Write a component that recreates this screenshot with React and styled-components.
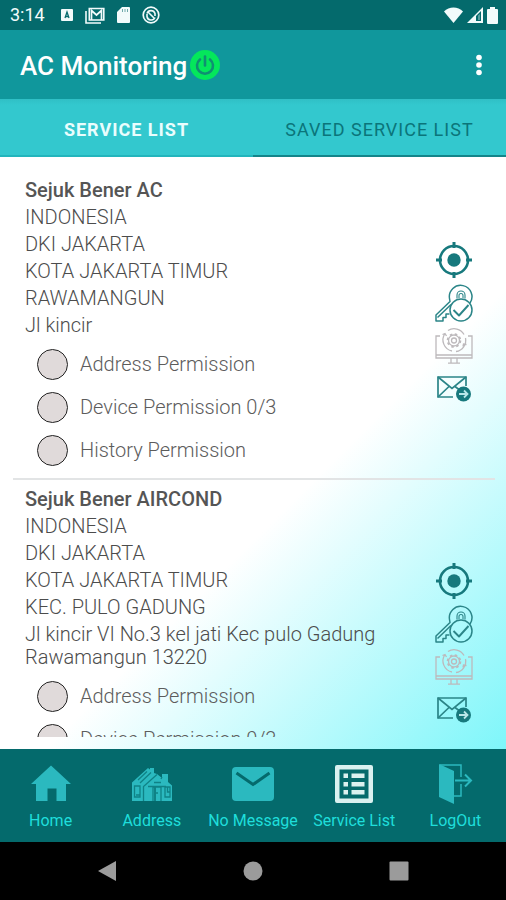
import React, { useState } from "react";
import styled, { createGlobalStyle } from "styled-components";

const GlobalStyles = createGlobalStyle`
  *,
  *::before,
  *::after {
    box-sizing: border-box;
  }
  body {
    margin: 0;
    font-family: Roboto, "Liberation Sans", sans-serif;
    background-color: #000;
  }
  button {
    padding: 0;
    border: none;
    background: none;
    color: inherit;
    font-family: inherit;
    cursor: pointer;
  }
  svg {
    display: block;
    flex-shrink: 0;
  }
`;

const AppStyles = styled.div`
  display: flex;
  flex-direction: column;
  height: 100vh;
`;

const StatusBar = styled.div`
  display: flex;
  align-items: center;
  justify-content: space-between;
  height: 30px;
  padding: 0 8px 0 10px;
  background-color: #046a6c;
  color: #f2fbfb;
`;

const StatusGroup = styled.div`
  display: flex;
  align-items: center;
  gap: ${(props) => props.$gap}px;
`;

const Clock = styled.span`
  margin-right: 4px;
  font-size: 18px;
  line-height: 20px;
`;

const Header = styled.header`
  display: flex;
  align-items: center;
  justify-content: space-between;
  height: 69px;
  padding: 0 20px;
  background-color: #10979c;
  color: #fff;
`;

const Brand = styled.div`
  display: flex;
  align-items: center;
  gap: 3px;
`;

const Heading = styled.h1`
  margin: 0;
  padding-top: 2px;
  font-size: 26px;
  line-height: 32px;
  font-weight: 500;
`;

const Tabs = styled.div`
  display: flex;
  background: linear-gradient(#30bfc5, #33c8ce 6px);
`;

const Tab = styled.button`
  flex: 1;
  height: 58px;
  padding-top: 4px;
  border-bottom: 2px solid
    ${(props) => (props.$active ? "#22b5bc" : "#14858a")};
  color: ${(props) => (props.$active ? "#e9fdfd" : "#0b757a")};
  font-size: 18px;
  font-weight: ${(props) => (props.$active ? 700 : 400)};
  letter-spacing: 1px;
  text-transform: uppercase;
`;

const Content = styled.main`
  display: flex;
  flex: 1;
  flex-direction: column;
  min-height: 0;
  padding: 14px 11px 12px 13px;
  background: linear-gradient(135deg, #fff 58%, #7ef6fa 100%);
`;

const List = styled.ul`
  flex: 1;
  min-height: 0;
  margin: 0;
  padding: 0;
  overflow-y: auto;
  list-style: none;
  scrollbar-width: none;
`;

const ServiceItem = styled.li`
  display: flex;
  align-items: center;
  gap: 16px;
  padding: 6px 22px 6px 12px;
  & + & {
    border-top: 2px solid #e2e4e5;
  }
`;

const ServiceInfo = styled.div`
  flex: 1;
  min-width: 0;
  color: #4c4c4c;
  font-size: 20px;
  line-height: 23px;
  font-weight: 300;
`;

const ServiceName = styled.h2`
  margin: 0;
  padding: 2px 0;
  color: #555;
  font-size: 20px;
  line-height: 23px;
  font-weight: 500;
`;

const AddressLine = styled.p`
  margin: 0;
  padding: 2px 0;
`;

const Permissions = styled.div`
  padding: 4px 0 0 12px;
`;

const Permission = styled.label`
  display: flex;
  align-items: center;
  gap: 12px;
  height: 43px;
  color: #5c5c5c;
`;

const Check = styled.input`
  appearance: none;
  width: 31px;
  height: 31px;
  margin: 0;
  border: 1px solid #222;
  border-radius: 50%;
  background-color: #e0dada;
  &:checked {
    background-color: #00e65a;
  }
`;

const Actions = styled.div`
  display: flex;
  flex-direction: column;
  gap: 5px;
`;

const BottomNav = styled.nav`
  display: flex;
  padding: 15px 0 11px;
  background-color: #046a6c;
`;

const NavButton = styled.button`
  display: flex;
  flex: 1;
  flex-direction: column;
  align-items: center;
  gap: 7px;
  width: 0;
  color: ${(props) => (props.$active ? "#daf1f0" : "#2bb9bf")};
`;

const NavLabel = styled.span`
  color: #1fdedb;
  font-size: 16px;
  line-height: 20px;
  white-space: nowrap;
`;

const SystemBar = styled.div`
  display: flex;
  align-items: center;
  justify-content: center;
  gap: 126px;
  height: 58px;
  background-color: #000;
  color: #9b9b9b;
`;

const IconKeyboard = () => (
  <svg width="12" height="14" viewBox="0 0 12 14">
    <rect y="1" width="12" height="12" rx="1" fill="currentColor" />
    <path d="M4 10 6 4l2 6M4.5 8.5h3" fill="none" stroke="#046a6c" strokeWidth="1.3" />
  </svg>
);

const IconMails = () => (
  <svg width="20" height="17" viewBox="0 0 20 17">
    <path d="M1 4v12h15" fill="none" stroke="currentColor" strokeWidth="1.6" />
    <path d="M4.300 1.500h14.500v11.500H4.300z" fill="none" stroke="currentColor" strokeWidth="1.600" />
    <path d="M6.500 13V3.500l5 4.500 5-4.500V13" fill="none" stroke="currentColor" strokeWidth="1.700" />
  </svg>
);

const IconSdCard = () => (
  <svg width="13" height="16" viewBox="0 0 13 16">
    <path
      d="M5 0h7a1 1 0 0 1 1 1v14a1 1 0 0 1-1 1H1a1 1 0 0 1-1-1V5z"
      fill="currentColor"
    />
    <path d="M5.500 2v3M8 2v3M10.500 2v3" stroke="#6fa9aa" strokeWidth="1" />
  </svg>
);

const IconSync = () => (
  <svg width="18" height="18" viewBox="0 0 18 18" fill="none" stroke="currentColor">
    <circle cx="9" cy="9" r="7.800" strokeWidth="1.700" />
    <path d="M5 7.500a4.200 4.200 0 0 1 8 0v2.500M13 11.500a4.200 4.200 0 0 1-8-1V8M6 6l6.500 6.500" strokeWidth="1.600" />
  </svg>
);

const IconWifi = () => (
  <svg width="19" height="16" viewBox="0 0 19 16">
    <path d="M9.500 16 0 4.500C5-1 14-1 19 4.500z" fill="currentColor" />
  </svg>
);

const IconSignal = () => (
  <svg width="16" height="16" viewBox="0 0 16 16">
    <path d="M16 0v16H0z" fill="currentColor" />
    <path d="M9 14V9L14 4v10z" fill="#046a6c" />
    <path d="M11 13V8.500L13 7v6z" fill="currentColor" opacity=".35" />
  </svg>
);

const IconBattery = () => (
  <svg width="11" height="17" viewBox="0 0 11 17">
    <path d="M3 0h5v2h2a1 1 0 0 1 1 1v13a1 1 0 0 1-1 1H1a1 1 0 0 1-1-1V3a1 1 0 0 1 1-1h2z" fill="currentColor" />
  </svg>
);

const IconPower = () => (
  <svg width="30" height="30" viewBox="0 0 30 30">
    <circle cx="15" cy="15" r="15" fill="#04e75b" />
    <g fill="none" stroke="#0f8f72" strokeWidth="2.600" strokeLinecap="round">
      <path d="M10 9.500a8 8 0 1 0 10 0" />
      <path d="M15 6.500v9" />
    </g>
  </svg>
);

const IconDots = () => (
  <svg width="14" height="22" viewBox="0 0 14 22" fill="currentColor">
    <circle cx="7" cy="3.500" r="2.800" />
    <circle cx="7" cy="11" r="2.800" />
    <circle cx="7" cy="18.500" r="2.800" />
  </svg>
);

const IconTarget = () => (
  <svg width="38" height="38" viewBox="0 0 38 38" fill="none" stroke="#17797d">
    <circle cx="19" cy="19" r="14" strokeWidth="2.600" />
    <path d="M19 1v6M19 31v6M1 19h6M31 19h6" strokeWidth="3" />
    <circle cx="19" cy="19" r="6.700" fill="#17797d" stroke="none" />
  </svg>
);

const IconKey = () => (
  <svg
    width="38"
    height="38"
    viewBox="0 0 38 38"
    fill="none"
    stroke="#2b8588"
    strokeWidth="1.500"
    strokeLinejoin="round"
  >
    <path d="M35 19A11.300 11.300 0 1 0 14.500 14.500L15 17.500 1 31v6h7v-3.500h3V30h3.500" />
    <path d="M16 20.500 2.500 33.500" />
    <path d="M22 14.500v-3.500a4 4 0 0 1 8 0v3.500M24 14v-2.500a2 2 0 0 1 4 0V14" strokeWidth="1.100" />
    <circle cx="26" cy="26" r="11" />
    <path d="m18.500 26 5.500 5.500 9.500-10.500" strokeWidth="1.900" />
  </svg>
);

const IconMonitor = () => (
  <svg
    width="38"
    height="38"
    viewBox="0 0 38 38"
    fill="none"
    stroke="#bdb9bc"
    strokeWidth="1.300"
  >
    <path d="M5 9H1v22h36V9h-4M1 28h36M16 31v4.500M22 31v4.500M13 36.200h12" />
    <path d="M17 24A11.300 11.300 0 0 1 10 6.500M13 3.500A11.300 11.300 0 0 1 29 7.500M30.500 11A11.300 11.300 0 0 1 21 24.500M7.500 7.500 10 6.500l1.500 2.500M28 19.500l.5-2.500 3 .5" />
    <circle cx="19" cy="13.500" r="5.500" />
    <circle cx="19" cy="13.500" r="6.400" strokeWidth="1.800" strokeDasharray="2.500 2.530" />
    <circle cx="19" cy="13.500" r="2.500" />
  </svg>
);

const IconMailSend = () => (
  <svg
    width="38"
    height="38"
    viewBox="0 0 38 38"
    fill="none"
    stroke="#2b8588"
    strokeWidth="1.700"
  >
    <path d="M18 27H3V7h28v9" />
    <path d="m3 7 14 11.500L31 7M3 27l11-10.500M20 16.500l4 3" />
    <circle cx="28.500" cy="24" r="7.500" fill="#17797d" stroke="none" />
    <path d="M24 24h8M29 20.500l3.500 3.500-3.500 3.500" stroke="#b9e6e8" strokeWidth="1.800" />
  </svg>
);

const IconHome = () => (
  <svg width="42" height="40" viewBox="0 0 42 40">
    <path d="M21 1.500 41 20h-5v17h-9.500V24.500h-9V37H6V20H1z" fill="currentColor" />
  </svg>
);

const IconHouses = () => (
  <svg width="42" height="40" viewBox="0 0 42 40">
    <path
      d="M1 18.500 17 4l2 1.500V4h4v5l3 1 5 4v-4h6v8l4 3.500V37H1z"
      fill="currentColor"
    />
    <g fill="none" stroke="#0f8286" strokeWidth="1.300">
      <path d="m9 19 11-10.500M7 16l9-8.500M12.500 37V22.500L26 10.500M31 13l-1 2" />
      <path d="M3.500 22h5.500v11H3.500zM5 31h4M22 37V23h8v14M24 25v12M25 29h2M34 23h5v10h-5zM36.500 23v5h2.500M17 22.500h18M23 18.500h7" />
      <path d="M24 23v14" strokeWidth="2" />
    </g>
  </svg>
);

const IconMessage = () => (
  <svg width="42" height="40" viewBox="0 0 42 40">
    <rect y="3" width="42" height="34" rx="4" fill="currentColor" />
    <path d="m4.500 9 16.500 11.500L37.500 9" fill="none" stroke="#046a6c" strokeWidth="3" />
  </svg>
);

const IconServiceList = () => (
  <svg width="42" height="40" viewBox="0 0 42 40" fill="currentColor">
    <path fillRule="evenodd" d="M4 1h34a2 2 0 0 1 2 2v34a2 2 0 0 1-2 2H4a2 2 0 0 1-2-2V3a2 2 0 0 1 2-2zM6.500 5.500v29h29v-29z" />
    <path d="M10.500 9.500H15V14h-4.500zM10.500 18H15v4.500h-4.500zM10.500 26H15v4.500h-4.500zM18.500 9.500h13V14h-13zM18.500 18h13v4.500h-13zM18.500 26h13v4.500h-13z" />
  </svg>
);

const IconLogOut = () => (
  <svg width="42" height="40" viewBox="0 0 42 40">
    <path d="m5 0 15 7v33L5 33z" fill="currentColor" />
    <g fill="none" stroke="currentColor" strokeWidth="1.500">
      <path d="M6 1h21v12M20 32h7V20" />
      <path d="M21 16.500h15M31 10.500l6 6-6 6" strokeWidth="2" />
    </g>
  </svg>
);

const IconBack = () => (
  <svg width="20" height="22" viewBox="0 0 20 22">
    <path d="M19 1v20L1 11z" fill="currentColor" />
  </svg>
);

const IconCircle = () => (
  <svg width="20" height="20" viewBox="0 0 20 20">
    <circle cx="10" cy="10" r="9.500" fill="currentColor" />
  </svg>
);

const IconSquare = () => (
  <svg width="20" height="20" viewBox="0 0 20 20">
    <rect width="19" height="19" x=".5" y=".5" rx="1" fill="currentColor" />
  </svg>
);

const tabs = ["Service List", "Saved Service List"];

const services = [
  {
    id: 1,
    name: "Sejuk Bener AC",
    address: [
      "INDONESIA",
      "DKI JAKARTA",
      "KOTA JAKARTA TIMUR",
      "RAWAMANGUN",
      "Jl kincir",
    ],
  },
  {
    id: 2,
    name: "Sejuk Bener AIRCOND",
    address: [
      "INDONESIA",
      "DKI JAKARTA",
      "KOTA JAKARTA TIMUR",
      "KEC. PULO GADUNG",
      "Jl kincir VI No.3 kel jati Kec pulo Gadung Rawamangun 13220",
    ],
  },
];

const permissions = [
  "Address Permission",
  "Device Permission 0/3",
  "History Permission",
];

const actions = [
  { label: "Locate", Icon: IconTarget },
  { label: "Access key", Icon: IconKey },
  { label: "Monitor", Icon: IconMonitor },
  { label: "Send message", Icon: IconMailSend },
];

const navItems = [
  { label: "Home", Icon: IconHome },
  { label: "Address", Icon: IconHouses },
  { label: "No Message", Icon: IconMessage },
  { label: "Service List", Icon: IconServiceList },
  { label: "LogOut", Icon: IconLogOut },
];

const systemKeys = [
  { label: "Back", Icon: IconBack },
  { label: "Home screen", Icon: IconCircle },
  { label: "Recent apps", Icon: IconSquare },
];

const Service = ({ service }) => (
  <ServiceItem>
    <ServiceInfo>
      <ServiceName>{service.name}</ServiceName>
      {service.address.map((line) => (
        <AddressLine key={line}>{line}</AddressLine>
      ))}
      <Permissions>
        {permissions.map((item) => (
          <Permission key={item}>
            <Check type='checkbox' />
            {item}
          </Permission>
        ))}
      </Permissions>
    </ServiceInfo>
    <Actions>
      {actions.map(({ label, Icon }) => (
        <button key={label} type='button' aria-label={label}>
          <Icon />
        </button>
      ))}
    </Actions>
  </ServiceItem>
);

const App = () => {
  const [activeTab, setActiveTab] = useState(tabs[0]);
  const [activeNav, setActiveNav] = useState("Service List");

  return (
    <AppStyles>
      <GlobalStyles />
      <StatusBar>
        <StatusGroup $gap={12}>
          <Clock>3:14</Clock>
          <IconKeyboard />
          <IconMails />
          <IconSdCard />
          <IconSync />
        </StatusGroup>
        <StatusGroup $gap={4}>
          <IconWifi />
          <IconSignal />
          <IconBattery />
        </StatusGroup>
      </StatusBar>
      <Header>
        <Brand>
          <Heading>AC Monitoring</Heading>
          <IconPower />
        </Brand>
        <button type='button' aria-label='More options'>
          <IconDots />
        </button>
      </Header>
      <Tabs role='tablist'>
        {tabs.map((tab) => (
          <Tab
            key={tab}
            type='button'
            role='tab'
            aria-selected={tab === activeTab}
            $active={tab === activeTab}
            onClick={() => setActiveTab(tab)}
          >
            {tab}
          </Tab>
        ))}
      </Tabs>
      <Content>
        <List>
          {services.map((service) => (
            <Service key={service.id} service={service} />
          ))}
        </List>
      </Content>
      <BottomNav>
        {navItems.map(({ label, Icon }) => (
          <NavButton
            key={label}
            type='button'
            $active={label === activeNav}
            onClick={() => setActiveNav(label)}
          >
            <Icon />
            <NavLabel>{label}</NavLabel>
          </NavButton>
        ))}
      </BottomNav>
      <SystemBar>
        {systemKeys.map(({ label, Icon }) => (
          <button key={label} type='button' aria-label={label}>
            <Icon />
          </button>
        ))}
      </SystemBar>
    </AppStyles>
  );
};

export default App;
